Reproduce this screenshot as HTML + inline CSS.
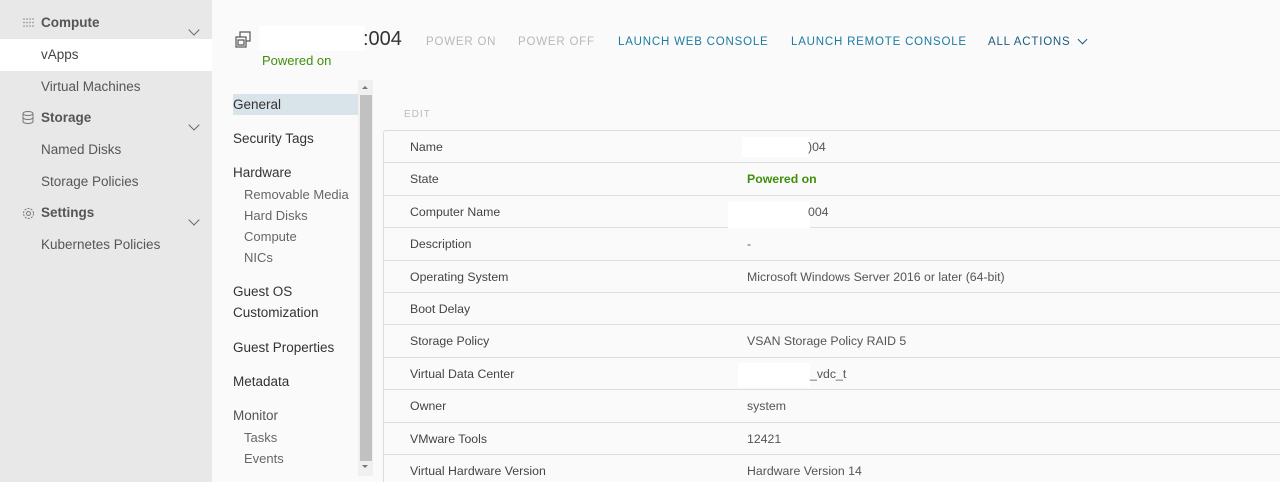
<!DOCTYPE html>
<html style="width:1280px;height:482px;overflow:hidden"><head><style>
*{margin:0;padding:0;box-sizing:border-box}
body{width:1280px;height:482px;overflow:hidden;background:#fafafa;font-family:"Liberation Sans",sans-serif;position:relative;color:#333}
.side{position:absolute;left:0;top:0;width:212px;height:482px;background:#e8e8e8}
.sh{position:absolute;left:22px;font-size:13.5px;font-weight:bold;color:#555}
.si{position:absolute;left:41px;font-size:13.5px;color:#565656}
.chev{position:absolute;left:190px;width:8px;height:8px;border-right:1.3px solid #666;border-bottom:1.3px solid #666;transform:rotate(45deg)}
.a{position:absolute;white-space:nowrap}
.nav{position:absolute;left:233px;font-size:13.5px;color:#333}
.sub{position:absolute;left:244px;font-size:13px;color:#666}
.btn{position:absolute;top:36px;font-size:11.5px;letter-spacing:0.8px}
.row{position:absolute;left:384px;width:900px;height:32.4px;border-bottom:1px solid #ddd;font-size:12.3px}
.row .k{position:absolute;left:26px;top:9px;color:#444}
.row .v{position:absolute;left:363px;top:9px;color:#555}
.w{position:absolute;background:#fff}
</style></head><body>
<div class="side">
 <div style="position:absolute;left:0;top:39px;width:212px;height:32px;background:#fff"></div>
 <svg class="a" style="left:22px;top:17px" width="12" height="11"><g fill="#888"><circle cx="2" cy="2" r=".8"/><circle cx="5" cy="2" r=".8"/><circle cx="8" cy="2" r=".8"/><circle cx="11" cy="2" r=".8"/><circle cx="2" cy="5.5" r=".8"/><circle cx="5" cy="5.5" r=".8"/><circle cx="8" cy="5.5" r=".8"/><circle cx="11" cy="5.5" r=".8"/><circle cx="2" cy="9" r=".8"/><circle cx="5" cy="9" r=".8"/><circle cx="8" cy="9" r=".8"/><circle cx="11" cy="9" r=".8"/></g></svg>
 <div class="sh" style="left:41px;top:15px">Compute</div><div class="chev" style="top:26px"></div>
 <div class="si" style="top:47px;color:#444">vApps</div>
 <div class="si" style="top:79px">Virtual Machines</div>
 <svg class="a" style="left:22px;top:111px" width="12" height="13"><g fill="none" stroke="#777"><ellipse cx="6" cy="2.5" rx="5" ry="2"/><path d="M1 2.5v8c0 1 2 2 5 2s5-1 5-2v-8M1 6.5c0 1 2 2 5 2s5-1 5-2"/></g></svg>
 <div class="sh" style="left:41px;top:110px">Storage</div><div class="chev" style="top:121px"></div>
 <div class="si" style="top:142px">Named Disks</div>
 <div class="si" style="top:174px">Storage Policies</div>
 <svg class="a" style="left:22px;top:207px" width="13" height="13"><circle cx="6.5" cy="6.5" r="2" fill="none" stroke="#777"/><circle cx="6.5" cy="6.5" r="5" fill="none" stroke="#777" stroke-dasharray="2 1.2"/></svg>
 <div class="sh" style="left:41px;top:205px">Settings</div><div class="chev" style="top:216px"></div>
 <div class="si" style="top:237px">Kubernetes Policies</div>
</div>
<svg class="a" style="left:235px;top:31px" width="16" height="17"><g fill="none" stroke="#555" stroke-width="1.2"><rect x="5" y="1" width="10" height="9"/><rect x="1" y="6" width="10" height="10" fill="#fafafa"/><rect x="3" y="9" width="6" height="5"/></g></svg>
<div class="w" style="left:259px;top:26px;width:106px;height:25px"></div>
<div class="a" style="left:363px;top:28px;font-size:20px;color:#333">:004</div>
<div class="a" style="left:262px;top:53px;font-size:13px;color:#3f8f0b">Powered on</div>
<div class="btn" style="left:426px;color:#b8b8b8">POWER ON</div>
<div class="btn" style="left:518px;color:#b8b8b8">POWER OFF</div>
<div class="btn" style="left:618px;color:#1b7ba3">LAUNCH WEB CONSOLE</div>
<div class="btn" style="left:791px;color:#1b7ba3">LAUNCH REMOTE CONSOLE</div>
<div class="btn" style="left:988px;color:#1e5a80">ALL ACTIONS</div>
<div class="a" style="left:1079px;top:36px;width:7px;height:7px;border-right:1.6px solid #1e5a80;border-bottom:1.6px solid #1e5a80;transform:rotate(45deg)"></div>
<div class="a" style="left:233px;top:94px;width:125px;height:21px;background:#d9e4ea"></div>
<div class="nav" style="top:97px">General</div>
<div class="nav" style="top:131px">Security Tags</div>
<div class="nav" style="top:165px">Hardware</div>
<div class="sub" style="top:187px">Removable Media</div>
<div class="sub" style="top:208px">Hard Disks</div>
<div class="sub" style="top:229px">Compute</div>
<div class="sub" style="top:250px">NICs</div>
<div class="nav" style="top:284px">Guest OS</div>
<div class="nav" style="top:305px">Customization</div>
<div class="nav" style="top:340px">Guest Properties</div>
<div class="nav" style="top:374px">Metadata</div>
<div class="nav" style="top:408px;color:#555">Monitor</div>
<div class="sub" style="top:430px">Tasks</div>
<div class="sub" style="top:451px">Events</div>
<div class="a" style="left:358px;top:80px;width:15px;height:396px;background:#f0f0f0"></div>
<div class="a" style="left:360px;top:95px;width:12px;height:366px;background:#c1c1c1"></div>
<div class="a" style="left:362px;top:86px;border:3px solid transparent;border-bottom:3px solid #777;border-top:0"></div>
<div class="a" style="left:362px;top:465px;border:3px solid transparent;border-top:3px solid #777;border-bottom:0"></div>
<div class="a" style="left:404px;top:109px;font-size:10px;letter-spacing:1px;color:#bbb">EDIT</div>
<div class="a" style="left:383px;top:130px;width:900px;height:360px;border:1px solid #ddd;border-radius:3px;background:#fafafa"></div>
<div class="row" style="top:131px"><span class="k">Name</span></div>
<div class="w" style="left:742px;top:137px;width:68px;height:20px"></div><div class="a" style="left:808px;top:140px;font-size:12.3px;color:#555">)04</div>
<div class="row" style="top:163.4px"><span class="k">State</span><span class="v" style="color:#3f8f0b;font-weight:bold">Powered on</span></div>
<div class="row" style="top:195.8px"><span class="k">Computer Name</span></div>
<div class="w" style="left:728px;top:202px;width:82px;height:26px"></div><div class="a" style="left:808px;top:205px;font-size:12.3px;color:#555">004</div>
<div class="row" style="top:228.2px"><span class="k">Description</span><span class="v">-</span></div>
<div class="row" style="top:260.6px"><span class="k">Operating System</span><span class="v">Microsoft Windows Server 2016 or later (64-bit)</span></div>
<div class="row" style="top:293px"><span class="k">Boot Delay</span></div>
<div class="row" style="top:325.4px"><span class="k">Storage Policy</span><span class="v">VSAN Storage Policy RAID 5</span></div>
<div class="row" style="top:357.8px"><span class="k">Virtual Data Center</span></div>
<div class="w" style="left:738px;top:363px;width:72px;height:24px"></div><div class="a" style="left:810px;top:367px;font-size:12.3px;color:#555">_vdc_t</div>
<div class="row" style="top:390.2px"><span class="k">Owner</span><span class="v">system</span></div>
<div class="row" style="top:422.6px"><span class="k">VMware Tools</span><span class="v">12421</span></div>
<div class="row" style="top:455px"><span class="k">Virtual Hardware Version</span><span class="v">Hardware Version 14</span></div>
</body></html>
